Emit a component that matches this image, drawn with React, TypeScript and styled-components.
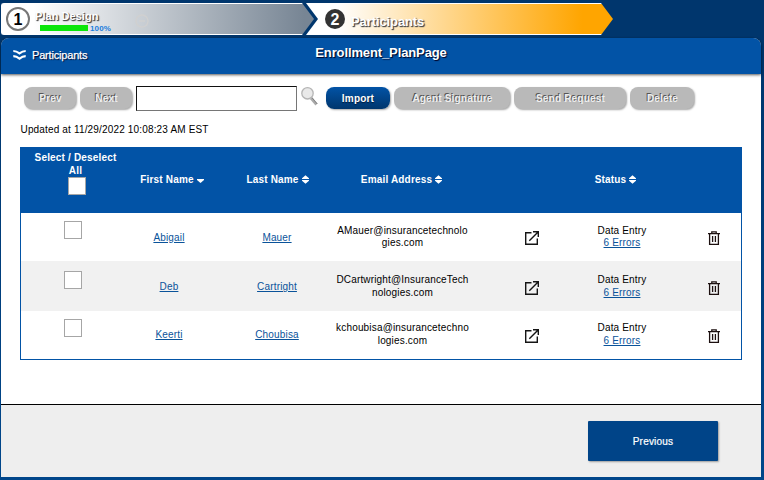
import React from "react";
import styled, { createGlobalStyle } from "styled-components";

const Global = createGlobalStyle`
  * { box-sizing: border-box; }
  body { margin: 0; font-family: "Liberation Sans", Arial, sans-serif; font-size: 10px; color: #000; }
  button, input { font-family: inherit; }
`;

const Page = styled.div`
  width: 764px;
  height: 480px;
  overflow: hidden;
  padding: 3px 3px 0 1px;
  background: linear-gradient(#00366d, #00366d 60px, #00468a 460px);
`;

const Steps = styled.nav`
  display: flex;
  height: 32px;
  margin-bottom: 3px;
`;

const Step = styled.div<{ $active?: boolean }>`
  display: flex;
  height: 32px;
  width: ${(p) => (p.$active ? 307 : 313)}px;
  margin-left: ${(p) => (p.$active ? -8 : 0)}px;
  padding-left: ${(p) => (p.$active ? 19 : 4)}px;
  border: solid #fff;
  border-width: 1px 0;
  border-left-width: ${(p) => (p.$active ? 0 : 1)}px;
  border-radius: ${(p) => (p.$active ? 0 : "3px 0 0 3px")};
  background: ${(p) =>
    p.$active
      ? "linear-gradient(90deg, #fff 10%, #ffa500 90%)"
      : "linear-gradient(90deg, #fff 10%, #778594 97%)"};
  clip-path: ${(p) =>
    p.$active
      ? "polygon(0 0, 295px 0, 307px 50%, 295px 100%, 0 100%, 12px 50%)"
      : "polygon(0 0, 301px 0, 313px 50%, 301px 100%, 0 100%)"};
`;

const StepNumber = styled.span<{ $active?: boolean }>`
  display: flex;
  align-items: center;
  justify-content: center;
  width: ${(p) => (p.$active ? 20 : 24)}px;
  height: ${(p) => (p.$active ? 20 : 24)}px;
  margin-top: ${(p) => (p.$active ? 5 : 3)}px;
  padding-top: 1px;
  border-radius: 50%;
  border: ${(p) => (p.$active ? "0" : "2px solid #777")};
  background: ${(p) => (p.$active ? "#333" : "#fff")};
  color: ${(p) => (p.$active ? "#fff" : "#000")};
  font-size: 16px;
  font-weight: 700;
`;

const StepBody = styled.div`
  width: 64px;
  margin-left: 5px;
  padding-top: 6px;
`;

const StepLabel = styled.div<{ $large?: boolean }>`
  color: #fff;
  font-size: ${(p) => (p.$large ? 13 : 11)}px;
  line-height: 13px;
  font-weight: 700;
  letter-spacing: ${(p) => (p.$large ? -0.1 : 0.05)}px;
  white-space: nowrap;
  margin: ${(p) => (p.$large ? "11px 0 0 6px" : "0")};
  text-shadow: 1px 1px 1px #444, 1px 1px 1px #777;
`;

const Progress = styled.div`
  display: flex;
  align-items: center;
  gap: 2px;
  height: 8px;
  margin: 1px 0 0 5px;
  color: #1a7ddd;
  font-size: 8px;
  font-weight: 700;
  letter-spacing: 0.15px;
`;

const Bar = styled.span`
  flex: 0 0 48px;
  height: 6px;
  background: #0be60b;
`;

const CollapseIcon = styled.svg`
  margin: 10px 0 0 36px;
`;

const Panel = styled.main`
  width: 760px;
  height: 439px;
  display: flex;
  flex-direction: column;
  background: #fff;
  border-radius: 8px 8px 0 0;
`;

const PanelHeader = styled.header`
  flex: 0 0 36px;
  display: grid;
  grid-template-columns: 250px 260px 1fr;
  background: #0253a6;
  border-radius: 8px 8px 0 0;
  color: #fff;
  box-shadow: 0 1px 3px rgba(0, 0, 0, 0.65);
  text-shadow: 1px 1px 1px #002;
`;

const Section = styled.div`
  display: flex;
  align-items: center;
  gap: 6px;
  padding: 0 0 2px 12px;
  font-size: 11px;
  letter-spacing: -0.18px;
  -webkit-text-stroke: 0.25px #fff;
`;

const Title = styled.h1`
  margin: 6px 0 0;
  text-align: center;
  font-size: 13px;
  line-height: 17px;
  letter-spacing: -0.12px;
`;

const Toolbar = styled.div`
  display: flex;
  height: 25px;
  margin: 12px 0 0 23px;
  gap: 4px;
`;

const ToolButton = styled.button<{ $w: number; $primary?: boolean }>`
  width: ${(p) => p.$w}px;
  height: 22px;
  margin-top: 1px;
  padding: ${(p) => (p.$primary ? "1px 0 0" : "0 0 0 1px")};
  border: 0;
  border-radius: 8px;
  background: ${(p) => (p.$primary ? "linear-gradient(#0253a6, #00366d)" : "#b9b9b9")};
  color: ${(p) => (p.$primary ? "#fff" : "#eee")};
  font-size: 10px;
  font-weight: 700;
  letter-spacing: 0.2px;
  white-space: nowrap;
  text-shadow: ${(p) => (p.$primary ? "0 1px 1px #001a38" : "-1px -1px 0 #555")};
  box-shadow: 1px 1px 2px rgba(0, 0, 0, 0.35);
`;

const Search = styled.input`
  width: 161px;
  height: 25px;
  border: 1px solid #767676;
  border-top-color: #111;
  border-left-color: #111;
  border-radius: 0;
  background: #fff;
`;

const Magnifier = styled.svg`
  margin: 0 4px 0 0;
`;

const Updated = styled.p`
  margin: 12px 0 10px 19.5px;
  line-height: 14px;
  letter-spacing: 0.16px;
`;

const Table = styled.section`
  width: 722px;
  margin-left: 19px;
  border: 1px solid #0253a6;
`;

const TableRow = styled.div<{ $h: number; $shade?: boolean }>`
  display: grid;
  grid-template-columns: 96px 104px 112px 137px 123px 58px 90px;
  height: ${(p) => p.$h}px;
  background: ${(p) => (p.$shade ? "#f1f1f1" : "#fff")};
  letter-spacing: 0.17px;
`;

const HeadRow = styled(TableRow)`
  background: #0253a6;
  color: #fff;
  font-weight: 700;
`;

const Cell = styled.div<{ $top: number; $shift?: number; $line?: number }>`
  display: flex;
  justify-content: center;
  align-items: flex-start;
  padding-top: ${(p) => p.$top}px;
  padding-left: ${(p) => p.$shift ?? 0}px;
  line-height: ${(p) => p.$line ?? 13}px;
  text-align: center;
  white-space: nowrap;
`;

const StatusHeadCell = styled(Cell)`
  padding-right: 13px;
`;

const SelectAll = styled.div`
  display: flex;
  flex-direction: column;
  align-items: center;
`;

const Checkbox = styled.input.attrs({ type: "checkbox" })`
  appearance: none;
  width: 18px;
  height: 18px;
  margin: 0;
  border: 1px solid #a6a6a6;
  background: #fff;
`;

const HeadCheckbox = styled(Checkbox)`
  margin-left: 3px;
`;

const Link = styled.a`
  color: #0a539a;
  text-decoration: underline;
`;

const SortMark = styled.svg`
  margin: 2px 0 0 3px;
`;

const Footer = styled.footer`
  height: 73px;
  margin-top: auto;
  padding: 16px 0 0 587px;
  border-top: 1px solid #000;
  background: #eee;
`;

const Previous = styled.button`
  width: 130px;
  height: 40px;
  border: 0;
  border-radius: 1px;
  background: #004488;
  color: #fff;
  font-size: 10px;
  letter-spacing: 0.2px;
  box-shadow: 1px 1px 2px rgba(0, 0, 0, 0.35);
  -webkit-text-stroke: 0.2px #fff;
`;

function Sort({ down }: { down?: boolean }) {
  return (
    <SortMark width="7" height="9" viewBox="0 0 7 9" fill="#fff">
      {down ? <path d="M0 4h7v1L3.5 8 0 5z" /> : <path d="M0 4V3.2L3.5.2 7 3.2V4zM0 5h7v.8L3.5 8.8 0 5.8z" />}
    </SortMark>
  );
}

function OpenIcon() {
  return (
    <svg width="16" height="16" viewBox="0 0 16 16" fill="none" stroke="#151515" strokeWidth="1.4">
      <path d="M7.5 2.7H1.7v11.6h11.6V8.5M9 1.7h5.3V7M14.3 1.7 5.3 10.7" />
    </svg>
  );
}

function TrashIcon() {
  return (
    <svg width="12" height="15" viewBox="0 0 12 15" fill="none" stroke="#1c1010" strokeWidth="1.3">
      <path d="M0 2.6h12M1.6 2.6v10.8h8.8V2.6M3.8 2.6V.8h4.4v1.8M4.6 5v6M7.4 5v6" />
    </svg>
  );
}

const people = [
  { first: "Abigail", last: "Mauer", email: ["AMauer@insurancetechnolo", "gies.com"], h: 48, top: 12, line: 12, box: 8, nameTop: 18, iconTop: 17 },
  { first: "Deb", last: "Cartright", email: ["DCartwright@InsuranceTech", "nologies.com"], h: 50, top: 12, line: 13, box: 10, nameTop: 19, iconTop: 19 },
  { first: "Keerti", last: "Choubisa", email: ["kchoubisa@insurancetechno", "logies.com"], h: 48, top: 10, line: 13, box: 8, nameTop: 17, iconTop: 17 },
];

export default function App() {
  return (
    <Page>
      <Global />
      <Steps>
        <Step>
          <StepNumber>1</StepNumber>
          <StepBody>
            <StepLabel>Plan Design</StepLabel>
            <Progress>
              <Bar />
              100%
            </Progress>
          </StepBody>
          <CollapseIcon width="14" height="14" viewBox="0 0 14 14" fill="none" stroke="#d0d0d0" strokeWidth="1.4">
            <circle cx="7" cy="7" r="6" />
            <path d="M4 7h6" />
          </CollapseIcon>
        </Step>
        <Step $active>
          <StepNumber $active>2</StepNumber>
          <StepLabel $large>Participants</StepLabel>
        </Step>
      </Steps>
      <Panel>
        <PanelHeader>
          <Section>
            <svg width="13" height="12" viewBox="0 0 13 12" fill="none" stroke="#fff" strokeWidth="2.2">
              <path d="M.3 2c2.7 0 4.2.8 6.2 2.4C8.500 2.800 10 2 12.700 2M.3 7.200c2.700 0 4.200.8 6.200 2.400 2-1.600 3.500-2.400 6.200-2.400" />
            </svg>
            Participants
          </Section>
          <Title>Enrollment_PlanPage</Title>
        </PanelHeader>
        <Toolbar>
          <ToolButton $w={52}>Prev</ToolButton>
          <ToolButton $w={52}>Next</ToolButton>
          <Search />
          <Magnifier width="17" height="20" viewBox="0 0 17 20">
            <path d="m10 12 5.5 6.5" stroke="#aaa" strokeWidth="2.8" />
            <path d="m10.800 11.500 5.500 6.500" stroke="#777" strokeWidth=".8" />
            <circle cx="6.5" cy="7.3" r="5.700" fill="#e9e9e9" stroke="#b5b5b5" strokeWidth="1.3" />
          </Magnifier>
          <ToolButton $w={64} $primary>Import</ToolButton>
          <ToolButton $w={116}>Agent Signature</ToolButton>
          <ToolButton $w={112}>Send Request</ToolButton>
          <ToolButton $w={64}>Delete</ToolButton>
        </Toolbar>
        <Updated>Updated at 11/29/2022 10:08:23 AM EST</Updated>
        <Table>
          <HeadRow $h={65}>
            <Cell $top={3} $shift={13}>
              <SelectAll>
                <span>Select / Deselect</span>
                <span>All</span>
                <HeadCheckbox />
              </SelectAll>
            </Cell>
            <Cell $top={25} $shift={6}>First Name<Sort down /></Cell>
            <Cell $top={25} $shift={1}>Last Name<Sort /></Cell>
            <Cell $top={25}>Email Address<Sort /></Cell>
            <Cell $top={0} />
            <StatusHeadCell $top={25}>Status<Sort /></StatusHeadCell>
          </HeadRow>
          {people.map((p, i) => (
            <TableRow key={p.first} $h={p.h} $shade={i === 1}>
              <Cell $top={p.box} $shift={8}><Checkbox /></Cell>
              <Cell $top={p.nameTop}><Link href="#">{p.first}</Link></Cell>
              <Cell $top={p.nameTop}><Link href="#">{p.last}</Link></Cell>
              <Cell $top={p.top} $line={p.line} $shift={2}>
                <span>{p.email[0]}<br />{p.email[1]}</span>
              </Cell>
              <Cell $top={p.iconTop}><OpenIcon /></Cell>
              <Cell $top={p.top} $line={p.line}>
                <span>Data Entry<br /><Link href="#">6 Errors</Link></span>
              </Cell>
              <Cell $top={p.iconTop + 1} $shift={36}><TrashIcon /></Cell>
            </TableRow>
          ))}
        </Table>
        <Footer>
          <Previous>Previous</Previous>
        </Footer>
      </Panel>
    </Page>
  );
}
